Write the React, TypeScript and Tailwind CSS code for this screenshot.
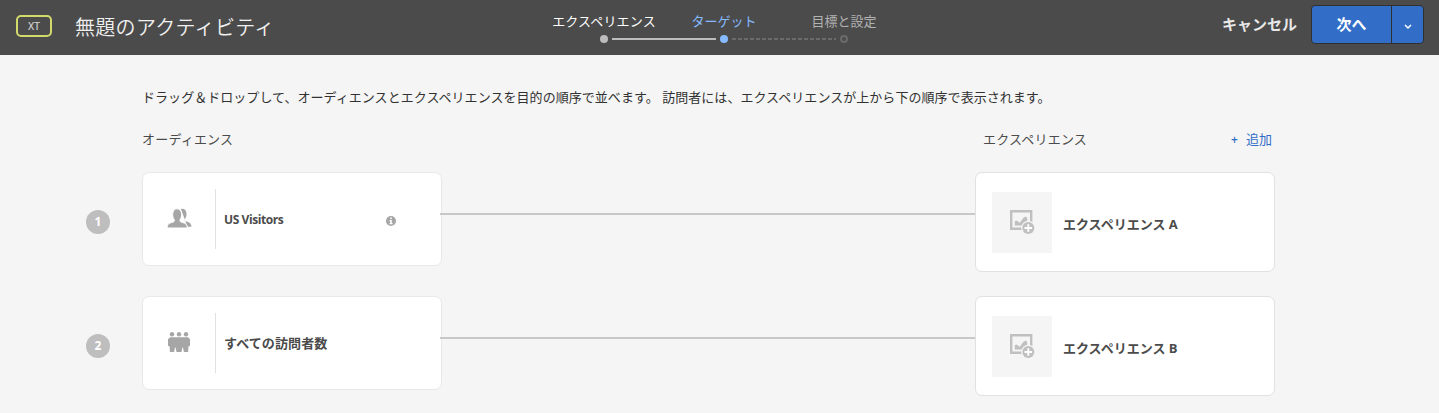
import React from 'react';

function PeopleIcon() {
  return (
    <svg width="26" height="22" viewBox="0 0 26 22" fill="#a6a6a6">
      <path d="M14.900.9c3.600-.4 5.600 1.400 5.600 5.300 0 2-.6 3.700-1.900 5v.8c0 .7.800 1.100 2.300 1.600 2.600.9 4.600 2.100 4.600 5.100h-4z" />
      <path d="M1.200 20v-1.200c0-2.600 2.100-3.600 4.200-4.200 2-.6 3-1 3-1.900v-.8C7.200 10.500 6.700 8.700 6.700 6.500 6.700 2.800 8.200.8 10.900.8s4.700 2 4.700 5.700c0 2.200-.6 4-1.700 5.400v.8c0 .9 1 1.300 3 1.900 2.100.6 4.200 1.600 4.200 4.200V20z" stroke="#fff" strokeWidth="1" />
    </svg>
  );
}

function CrowdIcon() {
  return (
    <svg width="24" height="22" viewBox="0 0 24 22" fill="#a6a6a6">
      <circle cx="5" cy="2.200" r="2.200" />
      <circle cx="12" cy="2.200" r="2.200" />
      <circle cx="19" cy="2.200" r="2.200" />
      <path d="M3 5.300h18l2 2v6.500l-1.600.7-.3 5.500h-4.200l-.9-4.500h-.6l-.9 4.500H9.500l-.9-4.500H8L7.100 20H2.900l-.3-5.500-1.600-.7V7.300z" />
    </svg>
  );
}

function PictureAddIcon() {
  return (
    <svg width="26" height="26" viewBox="0 0 26 26">
      <path d="M2.200 2.200h20v17.600h-20z" fill="none" stroke="#c0c0c0" strokeWidth="2.400" />
      <path d="M5.800 16.500v-4.200l1.700-.8 3.300 2.200 3.500-4.700 2.300-1.500 1.600 1.200V13l-5 3.500z" fill="#c0c0c0" />
      <circle cx="19.300" cy="19" r="7.200" fill="#f5f5f5" />
      <circle cx="19.300" cy="19" r="6" fill="#c0c0c0" />
      <path d="M19.300 15.200v7.600M15.500 19h7.600" stroke="#fff" strokeWidth="1.900" />
    </svg>
  );
}

function InfoIcon() {
  return (
    <svg width="10" height="10" viewBox="0 0 10 10">
      <circle cx="5" cy="5" r="5" fill="#a6a6a6" />
      <path d="M4.100 1.600h1.700v1.500H4.100zM3.500 4h2.300v3h.8v1.200H3.500V7h.7V5.100h-.7z" fill="#fff" />
    </svg>
  );
}

function Stepper() {
  return (
    <div className="flex h-[55px] w-[360px] flex-col pt-[11px] text-[13px] leading-[20px]">
      <div className="grid grid-cols-3 text-center">
        <span className="tracking-[0.15px] text-white">エクスペリエンス</span>
        <span className="text-[#86bbff]">ターゲット</span>
        <span className="text-[#b2b2b2]">目標と設定</span>
      </div>
      <div className="mt-1 flex h-2 items-center justify-center">
        <i className="size-2 rounded-full bg-[#bdbdbd]" />
        <i className="mx-1 h-[2px] w-[104px] bg-[#bdbdbd]" />
        <i className="size-2 rounded-full bg-[#86bbff]" />
        <svg className="mx-1" width="104" height="2">
          <path d="M0 1h104" stroke="#6a6a6a" strokeWidth="2" strokeDasharray="4 2" />
        </svg>
        <i className="size-2 rounded-full border-2 border-[#6a6a6a]" />
      </div>
    </div>
  );
}

type RowProps = {
  index: number;
  audience: React.ReactNode;
  experience: string;
  icon: React.ReactNode;
  info?: boolean;
};

function TargetRow({ index, audience, experience, icon, info }: RowProps) {
  return (
    <div className="flex h-[100px]">
      <div className="mr-8 flex size-6 shrink-0 items-center justify-center self-center rounded-full bg-[#bebebe] text-[12px] font-bold text-white">
        {index}
      </div>
      <div className="flex h-[94px] w-[300px] shrink-0 items-center rounded-[7px] border border-[#e8e8e8] bg-white">
        <div className="flex h-[60px] w-[73px] items-center justify-center border-r border-[#e1e1e1]">
          {icon}
        </div>
        <span className="ml-2 mt-[2px] w-[162px] whitespace-nowrap text-[13px] font-bold tracking-[0.1px] text-[#4b4b4b]">
          {audience}
        </span>
        {info && <div className="pt-1"><InfoIcon /></div>}
      </div>
      <div className="z-10 -ml-[2px] mt-[41px] h-[2px] w-[535px] shrink-0 bg-[#c8c8c8]" />
      <div className="flex h-[100px] w-[300px] shrink-0 items-center rounded-[7px] border border-[#e1e1e1] bg-white pl-4">
        <div className="flex h-[61px] w-[60px] items-center justify-center bg-[#f5f5f5]">
          <PictureAddIcon />
        </div>
        <span className="ml-[11px] mt-[5px] whitespace-nowrap text-[13px] font-bold text-[#4b4b4b]">
          {experience}
        </span>
      </div>
    </div>
  );
}

export default function App() {
  return (
    <div className="h-[413px] w-[1439px] overflow-hidden bg-[#f5f5f5] font-['Open_Sans','Noto_Sans_CJK_JP',sans-serif] text-[13px] text-[#4b4b4b]">
      <header className="flex h-[55px] bg-[#4b4b4b]">
        <div className="flex w-[544px] items-center pl-4">
          <div className="mb-[3px] flex h-[22px] w-9 items-center justify-center rounded-[5px] border-2 border-[#d3da6c] text-[10px] font-semibold text-[#c8c8c8]">
            XT
          </div>
          <h1 className="ml-[23px] text-[20px] font-[350] leading-[28px] tracking-[0.3px] text-[#f0f0f0]">
            無題のアクティビティ
          </h1>
        </div>
        <Stepper />
        <div className="flex flex-1 items-start justify-end pr-[15px] pt-[5px]">
          <button className="mr-[14px] h-[39px] text-[15px] font-bold text-[#e8e8e8]">キャンセル</button>
          <div className="flex h-[39px] w-[113px] overflow-hidden rounded-[4px] border border-[#303030] bg-[#326ec8] text-white">
            <button className="w-[80px] border-r border-[#303030] pb-px text-[15px] font-bold">次へ</button>
            <button className="flex flex-1 items-center justify-center" aria-label="次へ">
              <svg className="mt-1" width="8" height="6" viewBox="0 0 8 6" fill="none" stroke="white" strokeWidth="1.500">
                <path d="M1 1l3 3 3-3" />
              </svg>
            </button>
          </div>
        </div>
      </header>
      <main className="pl-[86px]">
        <p className="ml-14 whitespace-nowrap pt-[32px] leading-[20px] tracking-[0.045px] text-[#323232]">
          ドラッグ＆ドロップして、オーディエンスとエクスペリエンスを目的の順序で並べます。 訪問者には、エクスペリエンスが上から下の順序で表示されます。
        </p>
        <div className="ml-14 mt-[22px] flex h-5 w-[1130px] leading-[20px]">
          <span className="w-[841px] tracking-[0.2px]">オーディエンス</span>
          <span className="tracking-[0.2px]">エクスペリエンス</span>
          <button className="ml-auto flex h-5 items-start text-[#326ec8]">
            <span className="mr-2 pt-px text-[12px] font-semibold">+</span>
            追加
          </button>
        </div>
        <div className="mt-[23px] flex flex-col gap-6">
          <TargetRow
            index={1}
            audience={<span className="text-[12px] tracking-[-0.42px]">US Visitors</span>}
            experience="エクスペリエンス A"
            icon={<PeopleIcon />}
            info
          />
          <TargetRow index={2} audience="すべての訪問者数" experience="エクスペリエンス B" icon={<CrowdIcon />} />
        </div>
      </main>
    </div>
  );
}
